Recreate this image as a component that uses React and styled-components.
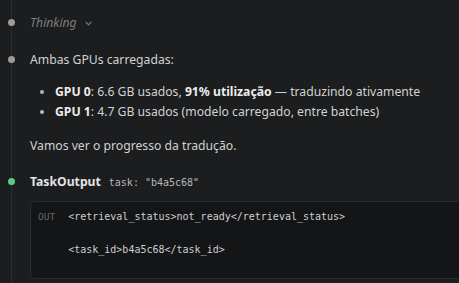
import React from "react";
import styled, { createGlobalStyle } from "styled-components";

const Global = createGlobalStyle`
  html, body { margin: 0; padding: 0; background: #1c1d1f; overflow: hidden; }
  body { font-family: "Noto Sans", "Open Sans", sans-serif; color: #d2d2d2; }
`;

const Page = styled.div`
  width: 459px;
  height: 283px;
  overflow: hidden;
  padding-left: 11px;
  box-sizing: border-box;
`;

const Rail = styled.div`
  border-left: 1px solid #2d2e31;
  padding: 13px 0 20px 18px;
  display: flex;
  flex-direction: column;
  min-height: 283px;
  box-sizing: border-box;
`;

const Entry = styled.div`
  position: relative;
  margin-top: ${(p) => p.$gap || 0}px;
`;

const Dot = styled.span`
  position: absolute;
  left: -22px;
  top: 6px;
  width: 7px;
  height: 7px;
  border-radius: 50%;
  background: ${(p) => (p.$green ? "#5cc98a" : "#9a9a9a")};
`;

const Thinking = styled.div`
  font-style: italic;
  font-size: 12.2px;
  line-height: 20px;
  color: #7d7d7d;
  display: flex;
  align-items: center;
  gap: 8px;
`;

const Chevron = styled.svg`
  width: 7px;
  height: 5px;
  margin-top: 1px;
`;

const Para = styled.p`
  margin: ${(p) => p.$top || 0}px 0 0;
  font-size: 12.2px;
  line-height: 20px;
  color: #d2d2d2;
`;

const List = styled.ul`
  margin: 12px 0 0;
  padding: 0 0 0 25px;
  font-size: 12.2px;
  line-height: 20px;
  color: #d2d2d2;
  li::marker { color: #b5b5b5; }
`;

const Strong = styled.b`
  font-weight: 700;
  color: #ececec;
`;

const ToolHead = styled.div`
  display: flex;
  align-items: baseline;
  gap: 8px;
  line-height: 20px;
`;

const ToolName = styled.span`
  font-weight: 700;
  font-size: 12.2px;
  color: #e4e4e4;
`;

const ToolArg = styled.span`
  font-family: "DejaVu Sans Mono", "Liberation Mono", monospace;
  font-size: 10px;
  color: #b8b8b8;
`;

const OutBox = styled.div`
  margin-top: 8px;
  width: 480px;
  background: #141517;
  border: 1px solid #2b2c2f;
  border-radius: 5px;
  padding: 7px 0 19px 7px;
  display: flex;
  gap: 13px;
  box-sizing: border-box;
`;

const OutLabel = styled.span`
  font-family: "DejaVu Sans Mono", "Liberation Mono", monospace;
  font-size: 9.5px;
  line-height: 16.5px;
  color: #646567;
`;

const Code = styled.pre`
  margin: 0;
  font-family: "DejaVu Sans Mono", "Liberation Mono", monospace;
  font-size: 10px;
  line-height: 16.5px;
  color: #cfcfcf;
`;

export default function App() {
  return (
    <>
      <Global />
      <Page>
        <Rail>
          <Entry>
            <Dot />
            <Thinking>
              Thinking
              <Chevron viewBox="0 0 7 5">
                <path d="M0.8 1 L3.5 3.8 L6.2 1" fill="none" stroke="#7d7d7d" strokeWidth="1.1" />
              </Chevron>
            </Thinking>
          </Entry>
          <Entry $gap={17}>
            <Dot />
            <Para>Ambas GPUs carregadas:</Para>
            <List>
              <li>
                <Strong>GPU 0</Strong>: 6.6 GB usados, <Strong>91% utilização</Strong> — traduzindo ativamente
              </li>
              <li>
                <Strong>GPU 1</Strong>: 4.7 GB usados (modelo carregado, entre batches)
              </li>
            </List>
            <Para $top={14}>Vamos ver o progresso da tradução.</Para>
          </Entry>
          <Entry $gap={16}>
            <Dot $green />
            <ToolHead>
              <ToolName>TaskOutput</ToolName>
              <ToolArg>task: "b4a5c68"</ToolArg>
            </ToolHead>
            <OutBox>
              <OutLabel>OUT</OutLabel>
              <Code>{"<retrieval_status>not_ready</retrieval_status>\n\n<task_id>b4a5c68</task_id>"}</Code>
            </OutBox>
          </Entry>
        </Rail>
      </Page>
    </>
  );
}
